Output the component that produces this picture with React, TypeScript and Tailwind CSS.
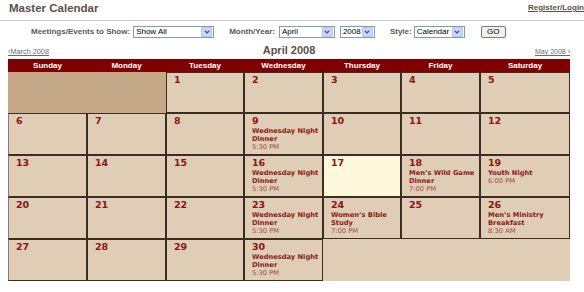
import React from "react";

// Master Calendar – April 2008 month view

const tahoma = { fontFamily: '"Liberation Sans", Arial, sans-serif' };
const verdana = { fontFamily: '"DejaVu Sans", Verdana, sans-serif' };

type Ev = { title: string[]; time: string };
type Day = { n: number; today?: boolean; events?: Ev[] };

const wed: Ev = { title: ["Wednesday Night", "Dinner"], time: "5:30 PM" };

const weeks: (Day | null)[][] = [
  [null, null, { n: 1 }, { n: 2 }, { n: 3 }, { n: 4 }, { n: 5 }],
  [{ n: 6 }, { n: 7 }, { n: 8 }, { n: 9, events: [wed] }, { n: 10 }, { n: 11 }, { n: 12 }],
  [
    { n: 13 },
    { n: 14 },
    { n: 15 },
    { n: 16, events: [wed] },
    { n: 17, today: true },
    { n: 18, events: [{ title: ["Men’s Wild Game", "Dinner"], time: "7:00 PM" }] },
    { n: 19, events: [{ title: ["Youth Night"], time: "6:00 PM" }] },
  ],
  [
    { n: 20 },
    { n: 21 },
    { n: 22 },
    { n: 23, events: [wed] },
    { n: 24, events: [{ title: ["Women’s Bible", "Study"], time: "7:00 PM" }] },
    { n: 25 },
    { n: 26, events: [{ title: ["Men’s Ministry", "Breakfast"], time: "8:30 AM" }] },
  ],
  [{ n: 27 }, { n: 28 }, { n: 29 }, { n: 30, events: [wed] }, null, null, null],
];

const dayNames = ["Sunday", "Monday", "Tuesday", "Wednesday", "Thursday", "Friday", "Saturday"];

function Arrow() {
  return (
    <span className="mr-[1px] flex h-[10px] w-[11px] items-center justify-center rounded-[1px] border border-[#b3c6f3] bg-[#c9d8fc]">
      <svg width="6" height="4" viewBox="0 0 6 4">
        <path d="M0.8 0.8 L3 3 L5.2 0.8" fill="none" stroke="#4a5f8c" strokeWidth="1.4" />
      </svg>
    </span>
  );
}

function Select({ value, className }: { value: string; className: string }) {
  return (
    <div className={"flex h-[12px] items-center justify-between border border-[#7f9db9] bg-white " + className}>
      <span className="pl-[2px] text-[8px] font-normal leading-[10px] text-black" style={tahoma}>
        {value}
      </span>
      <Arrow />
    </div>
  );
}

function Cell({ day, col, first }: { day: Day; col: number; first: boolean }) {
  return (
    <div
      className={
        "border border-[#3b2d21] pl-[7px] pt-[1px] " +
        (first ? "h-[41px] " : "h-[42px] ") +
        (col === 0 ? "border-l-[#857a70] " : "") +
        (day.today ? "bg-[#fff8dc]" : "bg-[#dfcdb5]")
      }
      style={verdana}
    >
      <div className="text-[9.5px] font-bold leading-[12px] text-[#8b1414]">{day.n}</div>
      {day.events?.map((ev, i) => (
        <div key={i} className="text-[6.7px] leading-[8px]">
          {ev.title.map((t) => (
            <div key={t} className="whitespace-nowrap font-bold text-[#8b1a1a]">
              {t}
            </div>
          ))}
          <div className="whitespace-nowrap text-[#9c4848]">{ev.time}</div>
        </div>
      ))}
    </div>
  );
}

export default function App() {
  return (
    <div className="h-[292px] w-[584px] overflow-hidden bg-white">
      {/* top bar */}
      <div className="flex h-[21px] items-start justify-between border-b border-[#c8c8c8]">
        <div className="pl-[9px] pt-[1px] text-[11.5px] font-bold leading-[14px] text-[#5e5048]" style={tahoma}>
          Master Calendar
        </div>
        <div className="pt-[3px] text-[8px] font-bold leading-[10px] text-[#5e5048] underline" style={tahoma}>
          Register/Login
        </div>
      </div>

      {/* filters */}
      <div className="mt-[5px] flex h-[12px] items-center text-[8px] font-bold text-[#5a5a5a]" style={tahoma}>
        <span className="ml-[31px]">Meetings/Events to Show:</span>
        <Select value="Show All" className="ml-[3px] w-[81px]" />
        <span className="ml-[15px]">Month/Year:</span>
        <Select value="April" className="ml-[4px] w-[56px]" />
        <Select value="2008" className="ml-[5px] w-[35px]" />
        <span className="ml-[15px]">Style:</span>
        <Select value="Calendar" className="ml-[2px] w-[51px]" />
        <div className="ml-[16px] flex h-[12px] w-[25px] items-center justify-center rounded-[2px] border border-[#7a7a7a] bg-[#f1f0ea] font-normal text-black">
          GO
        </div>
      </div>

      <div className="ml-[8px] w-[562px]">
        {/* month navigation */}
        <div className="grid h-[21px] grid-cols-[1fr_auto_1fr] items-end pb-[2px]" style={tahoma}>
          <span className="pb-[1px] text-[7.3px] leading-[9px] text-[#6a6a6a] underline">‹March 2008</span>
          <span className="text-[11px] font-bold leading-[13px] text-[#5e5048]">April 2008</span>
          <span className="pb-[1px] text-right text-[7px] leading-[9px] text-[#6a6a6a] underline">May 2008 ›</span>
        </div>

        {/* calendar grid */}
        <div className="grid grid-cols-[79px_79px_78px_79px_78px_79px_90px]">
          {dayNames.map((d) => (
            <div
              key={d}
              className="flex h-[13px] items-center justify-center bg-[#800000] text-[8px] font-bold text-white"
              style={tahoma}
            >
              {d}
            </div>
          ))}
          {weeks.map((week, w) => {
            const out: React.ReactNode[] = [];
            if (w === 0) out.push(<div key="e0" className="col-span-2 h-[41px] bg-[#c4a887]" />);
            week.forEach((day, c) => {
              if (day) out.push(<Cell key={`${w}-${c}`} day={day} col={c} first={w === 0} />);
            });
            if (w === weeks.length - 1) out.push(<div key="e4" className="col-span-3 h-[42px] bg-[#dfcdb5]" />);
            return out;
          })}
        </div>
      </div>
    </div>
  );
}
